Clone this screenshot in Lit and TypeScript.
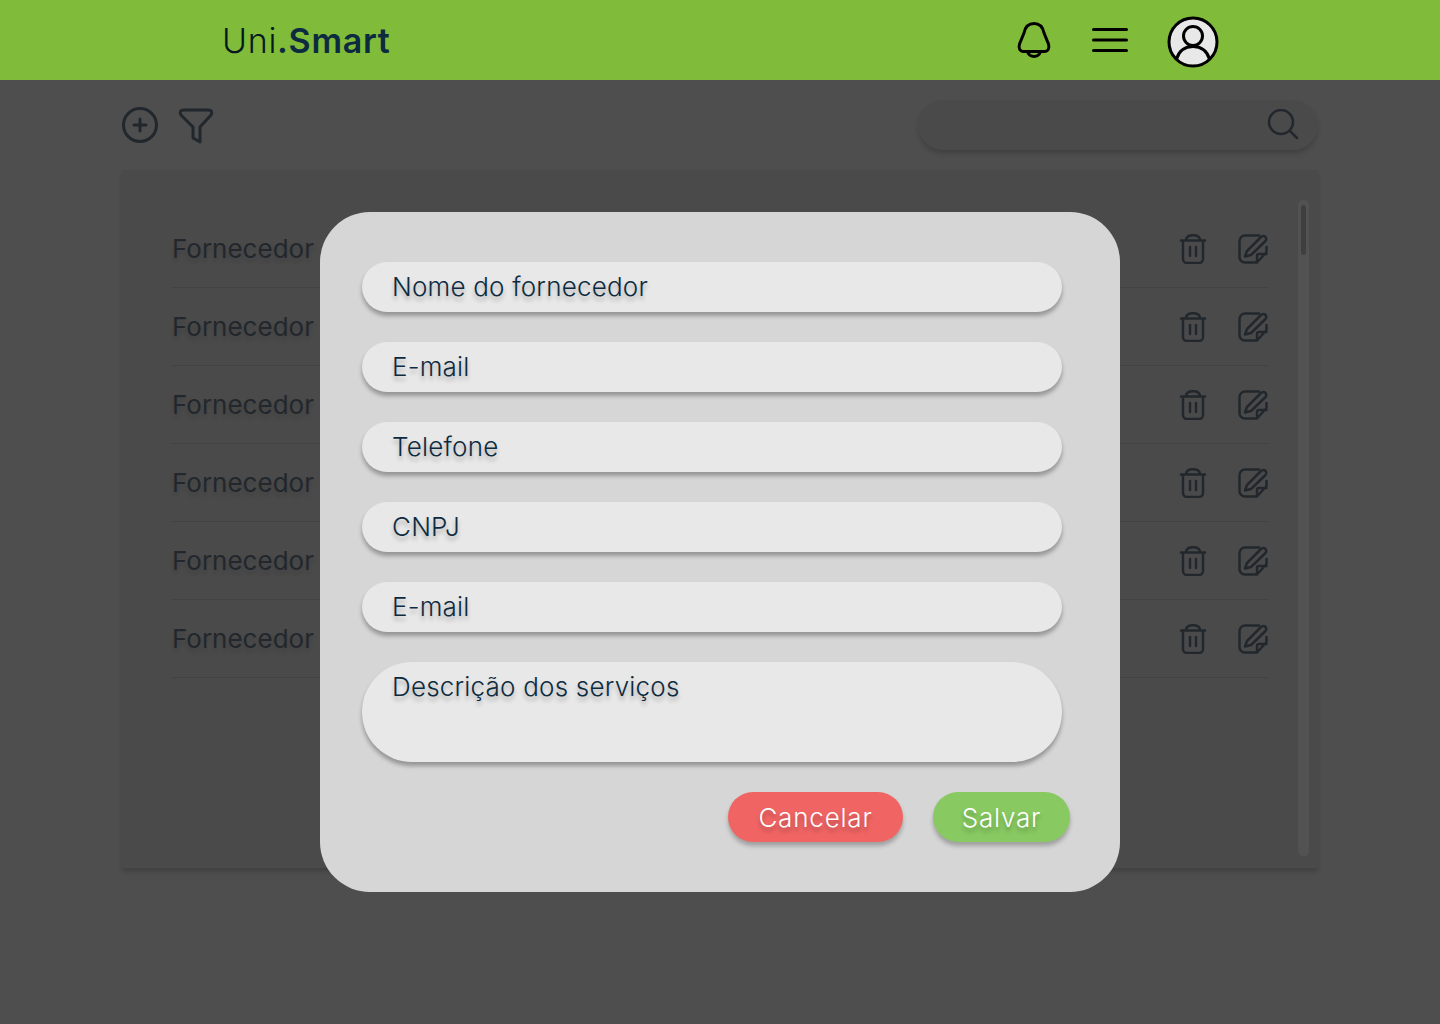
import { LitElement, html, css } from "lit";
import { customElement } from "lit/decorators.js";

const trash = html`<svg class="ic" width="30" height="30" viewBox="0 0 30 30" fill="none" stroke="currentColor" stroke-width="2.5" stroke-linecap="round" stroke-linejoin="round"><path d="M3 6.500H27M8 6.500C8 3 11 1.200 15 1.200S22 3 22 6.500M5 6.500V25a4 4 0 0 0 4 4H21a4 4 0 0 0 4-4V6.500M12 13V22M18 13V22"/></svg>`;
const edit = html`<svg class="ic" width="30" height="30" viewBox="0 0 30 30" fill="none" stroke="currentColor" stroke-width="2.5" stroke-linecap="round" stroke-linejoin="round"><path d="M21 1.500H7A5.500 5.500 0 0 0 1.500 7V23A5.500 5.500 0 0 0 7 28.500H19L28.500 18V13M19 28.500V22A2 2 0 0 1 21 20H28.500M7 22.500L9 17L23 3A2.800 2.800 0 0 1 27.500 7L13 21Z"/></svg>`;

@customElement("app-root")
export class AppRoot extends LitElement {
  static styles = css`
    :host { display: block; position: relative; height: 1024px; overflow: hidden; background: #e8e8e8; font-family: Inter, "Noto Sans", sans-serif; color: #0d2b40; }
    .top { height: 80px; background: #80bb3a; display: flex; align-items: center; padding: 0 221px 0 222px; box-sizing: border-box; position: relative; z-index: 2; }
    .logo { font-size: 34px; font-weight: 300; color: #07181f; letter-spacing: 0.7px; }
    .logo b { font-weight: 600; color: #0d2b40; }
    .tools { margin-left: auto; display: flex; align-items: center; color: #000; }
    .tools svg { display: block; }
    .bell { margin-right: 40px; }
    .menu { margin-right: 39px; }
    .avatar { margin-top: 3px; }
    .bar { display: flex; align-items: center; padding: 20px 122px 0; height: 50px; }
    .bar svg { display: block; }
    .plus { margin-right: 20px; }
    .funnel { margin-top: 2px; }
    .search { margin-left: auto; width: 400px; height: 50px; border-radius: 25px; background: #d5d5d5; box-shadow: 0 4px 4px rgba(0,0,0,.25); display: flex; align-items: center; justify-content: flex-end; padding-right: 19px; box-sizing: border-box; }
    .card { margin: 20px 122px 0; height: 698px; background: #d5d5d5; box-shadow: 0 4px 4px rgba(0,0,0,.25); position: relative; padding: 40px 50px 0; box-sizing: border-box; }
    .row { height: 78px; border-bottom: 1px solid #b1b1b1; box-sizing: border-box; display: flex; align-items: center; font-size: 26px; font-weight: 400; text-shadow: 0 4px 4px rgba(0,0,0,.25); }
    .row span { flex: 1; }
    .ic { display: block; }
    .row .ic:first-of-type { margin-right: 30px; }
    .track { position: absolute; right: 9px; top: 30px; width: 11px; height: 656px; border-radius: 6px; background: #fff; }
    .thumb { position: absolute; left: 3px; top: 5px; width: 5px; height: 50px; border-radius: 3px; background: #a2a2a2; }
    .overlay { position: absolute; left: 0; right: 0; top: 80px; bottom: 0; background: rgba(39,39,39,.8); display: flex; align-items: center; justify-content: center; z-index: 1; }
    .modal { width: 800px; height: 680px; border-radius: 50px; background: #d6d6d6; padding: 50px 42px; box-sizing: border-box; display: flex; flex-direction: column; gap: 30px; }
    .field { width: 700px; height: 50px; flex: none; border-radius: 25px; background: #e8e8e8; box-shadow: 0 4px 4px rgba(0,0,0,.3); padding: 0 30px 1px; box-sizing: border-box; display: flex; align-items: center; font-size: 26px; font-weight: 300; letter-spacing: 0.2px; text-shadow: 0 4px 4px rgba(0,0,0,.25); }
    .area { height: 100px; border-radius: 50px; align-items: flex-start; padding-top: 9px; }
    .actions { display: flex; justify-content: flex-end; gap: 30px; margin-right: 8px; }
    .btn { height: 50px; border-radius: 25px; color: #fff; display: flex; align-items: center; justify-content: center; font-size: 26px; font-weight: 300; letter-spacing: 0.8px; box-shadow: 0 4px 4px rgba(0,0,0,.25); text-shadow: 0 4px 4px rgba(0,0,0,.25); }
    .cancel { width: 175px; background: #f06464; }
    .save { width: 137px; background: #88c961; }
  `;

  render() {
    const rows = [0, 1, 2, 3, 4, 5];
    const fields = ["Nome do fornecedor", "E-mail", "Telefone", "CNPJ", "E-mail"];
    return html`
      <header class="top">
        <div class="logo">Uni<b>.Smart</b></div>
        <div class="tools">
          <svg class="bell" width="36" height="38" viewBox="0 0 36 38" fill="none" stroke="currentColor" stroke-width="3" stroke-linecap="round" stroke-linejoin="round"><path d="M18 2.500C12 2.500 9 7 8 12L3.500 23C2.500 27 3.500 30.500 7.500 30.500H28.500C32.500 30.500 33.500 27 32.500 23L28 12C27 7 24 2.500 18 2.500ZM11.500 31C13 34.500 15 35.500 18 35.500S23 34.500 24.500 31"/></svg>
          <svg class="menu" width="36" height="26" viewBox="0 0 36 26" fill="none" stroke="currentColor" stroke-width="3" stroke-linecap="round"><path d="M1.500 2.500H34.500M1.500 13H34.500M1.500 23.500H34.500"/></svg>
          <svg class="avatar" width="52" height="52" viewBox="0 0 52 52" fill="none" stroke="currentColor" stroke-width="3"><circle cx="26" cy="26" r="24" fill="#e8e8e8"/><circle cx="26" cy="20" r="9.500"/><path d="M9.500 43C12 35 18 30.500 26 30.500S40 35 42.500 43"/></svg>
        </div>
      </header>
      <div class="bar">
        <svg class="plus" width="36" height="36" viewBox="0 0 36 36" fill="none" stroke="currentColor" stroke-width="3" stroke-linecap="round"><circle cx="18" cy="18" r="16.500"/><path d="M18 12V24M12 18H24"/></svg>
        <svg class="funnel" width="36" height="38" viewBox="0 0 36 38" fill="none" stroke="currentColor" stroke-width="3" stroke-linejoin="round" stroke-linecap="round"><path d="M6 3H30Q35.500 3 33 8L22 20V35L15 31V20L3 8Q0.500 3 6 3Z"/></svg>
        <div class="search"><svg width="32" height="32" viewBox="0 0 32 32" fill="none" stroke="currentColor" stroke-width="2.500" stroke-linecap="round"><circle cx="14" cy="13" r="12"/><path d="M23 22L30 29"/></svg></div>
      </div>
      <section class="card">
        ${rows.map(() => html`<div class="row"><span>Fornecedor</span>${trash}${edit}</div>`)}
        <div class="track"><div class="thumb"></div></div>
      </section>
      <div class="overlay">
        <div class="modal">
          ${fields.map((f) => html`<div class="field">${f}</div>`)}
          <div class="field area">Descrição dos serviços</div>
          <div class="actions">
            <div class="btn cancel">Cancelar</div>
            <div class="btn save">Salvar</div>
          </div>
        </div>
      </div>
    `;
  }
}
